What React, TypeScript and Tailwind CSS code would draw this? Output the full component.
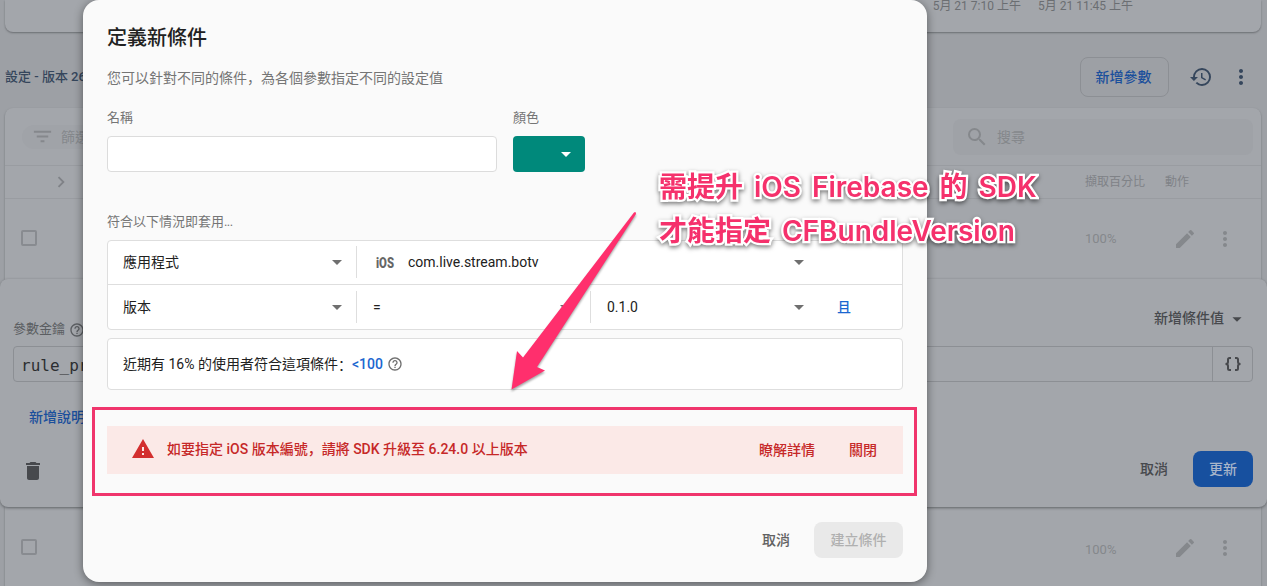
import type { ReactNode } from "react";
import {
  MdArrowDropDown,
  MdChevronRight,
  MdDelete,
  MdEdit,
  MdFilterList,
  MdHelpOutline,
  MdHistory,
  MdMoreVert,
  MdSearch,
  MdWarning,
} from "react-icons/md";

function Punctuation({ children }: { children: string }) {
  return (
    <span lang="zh-CN" className="font-['Noto_Sans_CJK_SC',sans-serif] leading-none">
      {children}
    </span>
  );
}

function ParameterRow({ className, valueClass }: { className: string; valueClass: string }) {
  return (
    <div className={`flex shrink-0 items-center pl-4 text-[#85888c] ${className}`}>
      <span className="mb-[3px] h-4 w-4 rounded-[2px] border-2 border-[#888b90]" />
      <span className={`ml-auto w-[88px] text-[13px] ${valueClass}`}>100%</span>
      <MdEdit className="h-6 w-6" />
      <MdMoreVert className="mr-[24px] ml-4 h-6 w-6" />
    </div>
  );
}

function Background() {
  return (
    <div className="flex h-full flex-col pl-[5px] pr-[6px] text-sm">
      <div className="flex h-8 shrink-0 justify-end rounded-b-lg bg-[#a3a6ab] pr-[128px] text-xs leading-[13px] text-[#6b6e72] shadow-[0_1px_2px_#6b6e72]">
        <span className="mr-[17px]">5月 21 7:10 上午</span>
        <span>5月 21 11:45 上午</span>
      </div>

      <div className="flex h-[76px] shrink-0 items-center pt-[14px] text-[#35465c]">
        <span className="text-[13px] font-medium">設定 - 版本 26</span>
        <button className="ml-auto h-10 w-[89px] rounded-lg border border-[#8c8f94] pr-0.5 font-medium text-[#1a4f9c]">
          新增參數
        </button>
        <MdHistory className="ml-5 h-6 w-6" />
        <MdMoreVert className="mr-2 ml-4 h-6 w-6" />
      </div>

      <div className="flex h-[500px] shrink-0 flex-col rounded-t-lg bg-[#a3a6ab] shadow-[0_1px_2px_#6b6e72]">
        <div className="flex h-[58px] shrink-0 items-center border-b border-[#999ca1] px-2 pl-[17px] text-[#85888c]">
          <div className="flex h-6 w-[300px] items-center gap-[7px] rounded-full bg-[#a0a3a8] pl-[9px]">
            <MdFilterList className="h-[23px] w-[23px]" />
            <span>篩選</span>
          </div>
          <div className="ml-auto flex h-9 w-[300px] items-center gap-[8px] rounded-lg bg-[#9fa2a7] pl-3">
            <MdSearch className="h-6 w-6" />
            <span>搜尋</span>
          </div>
        </div>
        <div className="flex h-[33px] shrink-0 items-center border-b border-[#999ca1] text-xs text-[#7f8287]">
          <MdChevronRight className="ml-[45px] h-[22px] w-[22px]" />
          <span className="ml-auto w-20">擷取百分比</span>
          <span className="w-[96px]">動作</span>
        </div>
        <ParameterRow className="h-[80px]" valueClass="" />

        <div className="relative -mr-[6px] -ml-[5px] flex h-[228px] shrink-0 flex-col rounded-lg bg-[#a3a6ab] px-[13px] pr-[14px] text-[#47494d] shadow-[0_1px_3px_#606367]">
          <div className="flex h-[67px] items-end justify-between">
            <div className="flex items-center gap-1 pb-[7px] text-[13px] text-[#5b5e62]">
              參數金鑰 <MdHelpOutline className="h-4 w-4" />
            </div>
            <div className="flex items-center pr-1 pb-[16px] font-medium">
              新增條件值 <MdArrowDropDown className="ml-px h-6 w-6 pt-[2px]" />
            </div>
          </div>
          <div className="flex h-9 shrink-0 rounded border border-[#8c8f94]">
            <div className="flex-1 pl-[7px] font-['DejaVu_Sans_Mono',monospace] text-base leading-[37px] text-[#2c2e31]">
              rule_pr
            </div>
            <div className="flex w-10 items-center justify-center border-l border-[#8c8f94]">
              <svg viewBox="0 0 18 16" className="h-4 w-[18px]" fill="none" stroke="#47494d" strokeWidth="2">
                <path d="M7 2H5.500Q4 2 4 3.500V6Q4 8 1.500 8Q4 8 4 10V12.500Q4 14 5.500 14H7" />
                <path d="M11 2H12.500Q14 2 14 3.500V6Q14 8 16.500 8Q14 8 14 10V12.500Q14 14 12.500 14H11" />
              </svg>
            </div>
          </div>
          <div className="mt-[25px] pl-4 font-medium text-[#1a4f9c]">新增說明</div>
          <div className="mt-6 flex items-center">
            <MdDelete className="mt-1 ml-2 h-6 w-6" />
            <span className="ml-auto font-medium">取消</span>
            <button className="ml-[25px] h-9 w-[60px] rounded-lg bg-[#17509f] font-medium text-[#a7b5ca]">更新</button>
          </div>
        </div>
        <ParameterRow className="h-[84px] pb-0.5" valueClass="pt-1" />
      </div>
    </div>
  );
}

function Select({ className, children }: { className: string; children: ReactNode }) {
  return (
    <div className={`flex h-8 items-center justify-between ${className}`}>
      <span className="flex items-center">{children}</span>
      <MdArrowDropDown className="h-6 w-6 text-[#6f6f6f]" />
    </div>
  );
}

function ConditionDialog() {
  return (
    <div className="absolute top-0 left-[83px] flex h-[582px] w-[844px] flex-col rounded-2xl bg-[#fafafa] px-6 text-sm text-[#212121] shadow-[0_2px_10px_rgba(0,0,0,0.45)]">
      <h2 className="mt-[23px] text-xl leading-[30px] font-medium">定義新條件</h2>
      <p className="mt-[15px] h-5 leading-5 text-[#757575]">
        您可以針對不同的條件<Punctuation>，</Punctuation>為各個參數指定不同的設定值
      </p>
      <div className="mt-[20px] flex gap-4 text-[13px] leading-5 text-[#757575]">
        <div className="w-[390px]">
          <div>名稱</div>
          <div className="mt-[8px] h-9 rounded border border-[#dcdcdc] bg-white" />
        </div>
        <div>
          <div>顏色</div>
          <div className="mt-[8px] flex h-9 w-[72px] items-center justify-end rounded bg-[#00897b] pr-[7px] text-white">
            <MdArrowDropDown className="h-6 w-6" />
          </div>
        </div>
      </div>
      <p className="mt-[40px] h-5 text-[13px] leading-5 text-[#757575]">
        符合以下情況即套用<span className="tracking-[-0.6px]">...</span>
      </p>

      <div className="mt-[8px] rounded border border-[#dedede] bg-white">
        <div className="flex h-[44px] items-center border-b border-[#dedede] pb-0.5">
          <Select className="w-[249px] border-r border-[#dedede] pr-[7px] pl-[15px]">應用程式</Select>
          <Select className="w-[454px] pl-[19px]">
            <svg viewBox="0 0 18 16" className="mr-[14px] h-4 w-[18px] overflow-visible">
              <text
                x="0"
                y="13.5"
                textLength="18"
                lengthAdjust="spacingAndGlyphs"
                fill="#666666"
                fontFamily="Roboto"
                fontSize="14"
                fontWeight="900"
              >
                iOS
              </text>
            </svg>
            com.live.stream.botv
          </Select>
        </div>
        <div className="flex h-[44px] items-center">
          <Select className="w-[249px] border-r border-[#dedede] pr-[7px] pl-[15px]">版本</Select>
          <Select className="w-[234px] border-r border-[#dedede] pr-[13px] pl-4">=</Select>
          <Select className="w-[220px] pl-4">0.1.0</Select>
          <span className="ml-[26px] font-medium text-[#1a66d0]">且</span>
        </div>
      </div>

      <div className="mt-2 flex h-[52px] items-center rounded border border-[#dedede] bg-white pl-[15px]">
        近期有 16% 的使用者符合這項條件<Punctuation>：</Punctuation>
        <span className="mr-1 font-medium text-[#1a66d0]">&lt;100</span>
        <MdHelpOutline className="h-4 w-4 text-[#6f6f6f]" />
      </div>

      <div className="mt-9 flex h-12 items-center bg-[#fbe9e7] pr-[26px] pl-6 font-medium text-[#c62828]">
        <MdWarning className="mr-3 mb-0.5 h-6 w-6 text-[#d32f2f]" />
        <span className="pb-[3px]">
          如要指定 iOS 版本編號<Punctuation>，</Punctuation>請將 SDK 升級至 6.24.0 以上版本
        </span>
        <span className="ml-auto">瞭解詳情</span>
        <span className="ml-[34px]">關閉</span>
      </div>

      <div className="mt-12 flex items-center justify-end font-medium text-[#616161]">
        取消
        <button className="ml-[24px] h-9 w-[89px] rounded-lg bg-[#e9e9e9] text-[#b0b0b0]">建立條件</button>
      </div>
    </div>
  );
}

function Annotation() {
  return (
    <div className="pointer-events-none absolute inset-0 text-[#f5316c]">
      <div className="absolute top-[407px] left-[92px] h-[89px] w-[825px] border-[3px] border-[#f0356c]" />
      <svg
        viewBox="500 200 150 200"
        className="absolute top-[200px] left-[500px] h-[200px] w-[150px] drop-shadow-[0_2px_1px_rgba(0,0,0,0.35)]"
      >
        <path d="M634 212.500Q636 211 636 214L537 367L545 370.500L511.500 389.500L517 351L523 357.500Z" fill="#ff2f6d" />
      </svg>
      <div className="absolute top-[165px] left-[659px] font-[Inter,'Noto_Sans_CJK_TC',sans-serif] text-[28px] leading-[44px] font-semibold [word-spacing:3.9px] whitespace-nowrap drop-shadow-[0_2px_2px_rgba(0,0,0,0.5)] [-webkit-text-stroke:4.5px_white] [paint-order:stroke_fill]">
        <div>需提升 iOS Firebase 的 SDK</div>
        <div>才能指定 CFBundleVersion</div>
      </div>
    </div>
  );
}

export default function App() {
  return (
    <div className="relative h-[586px] w-[1267px] overflow-hidden bg-[#9da0a5] font-[Roboto,'Noto_Sans_CJK_TC',sans-serif]">
      <Background />
      <ConditionDialog />
      <Annotation />
    </div>
  );
}
